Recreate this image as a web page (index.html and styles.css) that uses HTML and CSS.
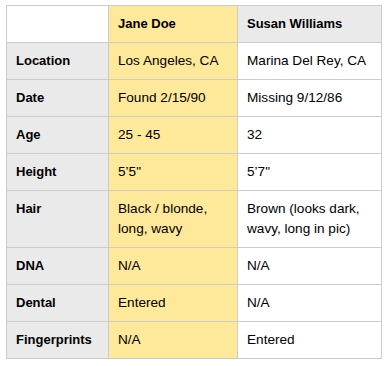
FILE: index.html
```html
<!DOCTYPE html>
<html>
<head>
<meta charset="utf-8">
<link rel="stylesheet" href="styles.css">
</head>
<body>
<table class="compare">
  <colgroup>
    <col class="c1">
    <col class="c2">
    <col class="c3">
  </colgroup>
  <thead>
    <tr>
      <th class="blank"></th>
      <th class="jane">Jane Doe</th>
      <th class="susan">Susan Williams</th>
    </tr>
  </thead>
  <tbody>
    <tr><th>Location</th><td class="jane">Los Angeles, CA</td><td>Marina Del Rey, CA</td></tr>
    <tr><th>Date</th><td class="jane">Found 2/15/90</td><td>Missing 9/12/86</td></tr>
    <tr><th>Age</th><td class="jane">25 - 45</td><td>32</td></tr>
    <tr><th>Height</th><td class="jane">5’5"</td><td>5’7"</td></tr>
    <tr><th>Hair</th><td class="jane">Black / blonde, long, wavy</td><td>Brown (looks dark, wavy, long in pic)</td></tr>
    <tr><th>DNA</th><td class="jane">N/A</td><td>N/A</td></tr>
    <tr><th>Dental</th><td class="jane">Entered</td><td>N/A</td></tr>
    <tr><th>Fingerprints</th><td class="jane">N/A</td><td>Entered</td></tr>
  </tbody>
</table>
</body>
</html>
```
FILE: styles.css
```css
body {
  margin: 5px 0 0 6px;
  background: #fff;
  font-family: "Liberation Sans", Arial, sans-serif;
  font-size: 13px;
  color: #000;
}
.compare {
  border-collapse: collapse;
  table-layout: fixed;
  width: 375px;
}
.c1 { width: 102px; }
.c2 { width: 129px; }
.c3 { width: 144px; }
.compare th,
.compare td {
  border: 1px solid #cccccc;
  padding: 8px 9px;
  line-height: 20px;
  text-align: left;
  vertical-align: top;
}
.compare th {
  font-weight: bold;
  background: #eaeaea;
}
.compare td {
  font-weight: normal;
  font-size: 13.6px;
  background: #fff;
}
.compare th.blank {
  background: #fff;
}
.compare .jane {
  background: #fee89a;
}
.compare th.susan {
  background: #eaeaea;
}
```
